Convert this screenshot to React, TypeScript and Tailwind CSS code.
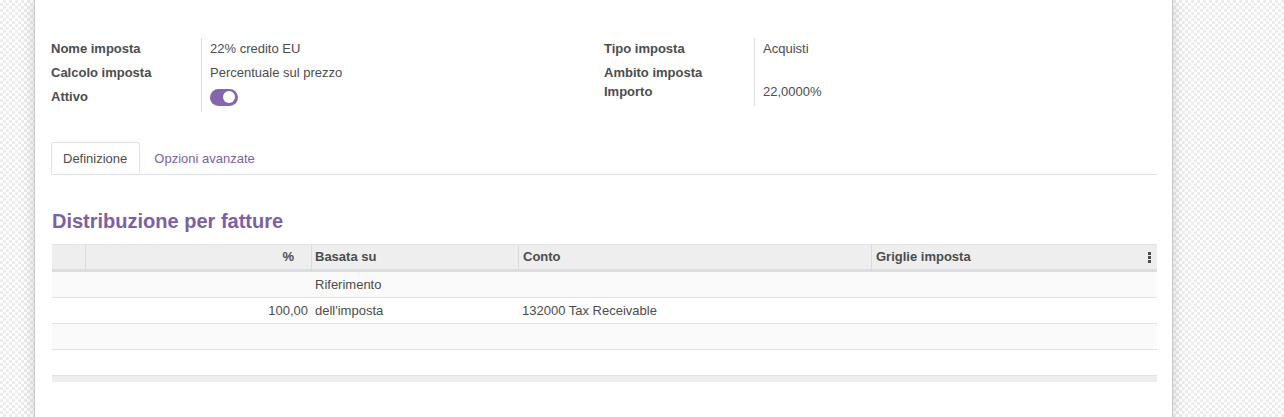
import React from 'react';

const purple = 'text-[#7c5fa6]';

function Field({ label, children, tall }: { label: string; children?: React.ReactNode; tall?: string }) {
  return (
    <div className={`flex items-center ${tall ?? 'h-6'}`}>
      <div className="w-[150px] shrink-0 font-bold text-[#4c4c4c]">{label}</div>
      <div className="pl-[9px] text-[#4c4c4c]">{children}</div>
    </div>
  );
}

function Toggle() {
  return (
    <div className="flex h-[17px] w-[28px] items-center justify-end rounded-full bg-[#8466ae] pr-[3px]">
      <div className="h-[12px] w-[12px] rounded-full bg-white" />
    </div>
  );
}

const rows = [
  { pct: '', base: 'Riferimento', conto: '' },
  { pct: '100,00', base: "dell'imposta", conto: '132000 Tax Receivable' },
  { pct: '', base: '', conto: '' },
  { pct: '', base: '', conto: '' },
];

export default function App() {
  return (
    <div className="h-[417px] w-full overflow-hidden bg-[repeating-conic-gradient(#ededed_0_25%,#ffffff_0_50%)] bg-[length:6px_6px] font-['Liberation_Sans',Arial,sans-serif] text-[13px]">
      <div className="ml-[34px] h-full w-[1139px] border-x border-[#c9c9cf] bg-white pl-[16px] pr-[15px] pt-[37px] shadow-[0_0_14px_rgba(0,0,0,0.18)]">
        {/* fields */}
        <div className="grid grid-cols-2">
          <div className="relative">
            <div className="absolute left-[150px] top-[1px] h-[74px] border-l border-[#dcdcdc]" />
            <Field label="Nome imposta">22% credito EU</Field>
            <Field label="Calcolo imposta">Percentuale sul prezzo</Field>
            <Field label="Attivo" tall="h-6">
              <Toggle />
            </Field>
          </div>
          <div className="relative">
            <div className="absolute left-[150px] top-[1px] h-[68px] border-l border-[#dcdcdc]" />
            <Field label="Tipo imposta">Acquisti</Field>
            <Field label="Ambito imposta" tall="h-6" />
            <Field label="Importo" tall="h-[14px]">22,0000%</Field>
          </div>
        </div>

        {/* tabs */}
        <div className="mt-[33px] flex border-b border-[#dee2e6]">
          <div className="-mb-px flex h-[32px] items-center rounded-t-[3px] border border-b-white border-[#dee2e6] bg-white pl-[11px] pr-[12px] pt-px text-[#4c4c4c]">
            Definizione
          </div>
          <div className={`flex h-[32px] items-center pl-[14px] pt-px ${purple}`}>Opzioni avanzate</div>
        </div>

        {/* section */}
        <h2 className={`mt-[34px] pl-px text-[20px] font-bold leading-6 ${purple}`}>Distribuzione per fatture</h2>

        <div className="ml-px mt-[11px]">
          <div className="flex h-[28px] border-t border-b-[3px] border-[#e3e3e6] border-b-[#dcdde1] bg-[#eeeeee] font-bold text-[#4c4c4c]">
            <div className="w-[34px] shrink-0 border-r border-[#dcdcdc]" />
            <div className="flex w-[226px] shrink-0 items-center justify-end border-r border-[#dcdcdc] pr-[17px]">%</div>
            <div className="flex w-[207px] shrink-0 items-center border-r border-[#dcdcdc] pl-[3px]">Basata su</div>
            <div className="flex w-[353px] shrink-0 items-center border-r border-[#dcdcdc] pl-[4px]">Conto</div>
            <div className="flex flex-1 items-center justify-between pl-[4px] pr-[6px]">
              <span>Griglie imposta</span>
              <span className="flex flex-col gap-[1px]">
                <span className="h-[3px] w-[3px] bg-[#4c4c4c]" />
                <span className="h-[3px] w-[3px] bg-[#4c4c4c]" />
                <span className="h-[3px] w-[3px] bg-[#4c4c4c]" />
              </span>
            </div>
          </div>
          {rows.map((r, i) => (
            <div
              key={i}
              className={`flex h-[26px] items-center border-b border-[#e2e2e6] text-[#4c4c4c] ${i % 2 === 0 ? 'bg-[#fafafa]' : 'bg-white'}`}
            >
              <div className="w-[34px] shrink-0" />
              <div className="w-[226px] shrink-0 pr-[4px] text-right">{r.pct}</div>
              <div className="w-[207px] shrink-0 pl-[3px]">{r.base}</div>
              <div className="w-[353px] shrink-0 pl-[3px]">{r.conto}</div>
              <div className="flex-1" />
            </div>
          ))}
          <div className="h-[6px] bg-[#eeeeee]" />
        </div>
      </div>
    </div>
  );
}
